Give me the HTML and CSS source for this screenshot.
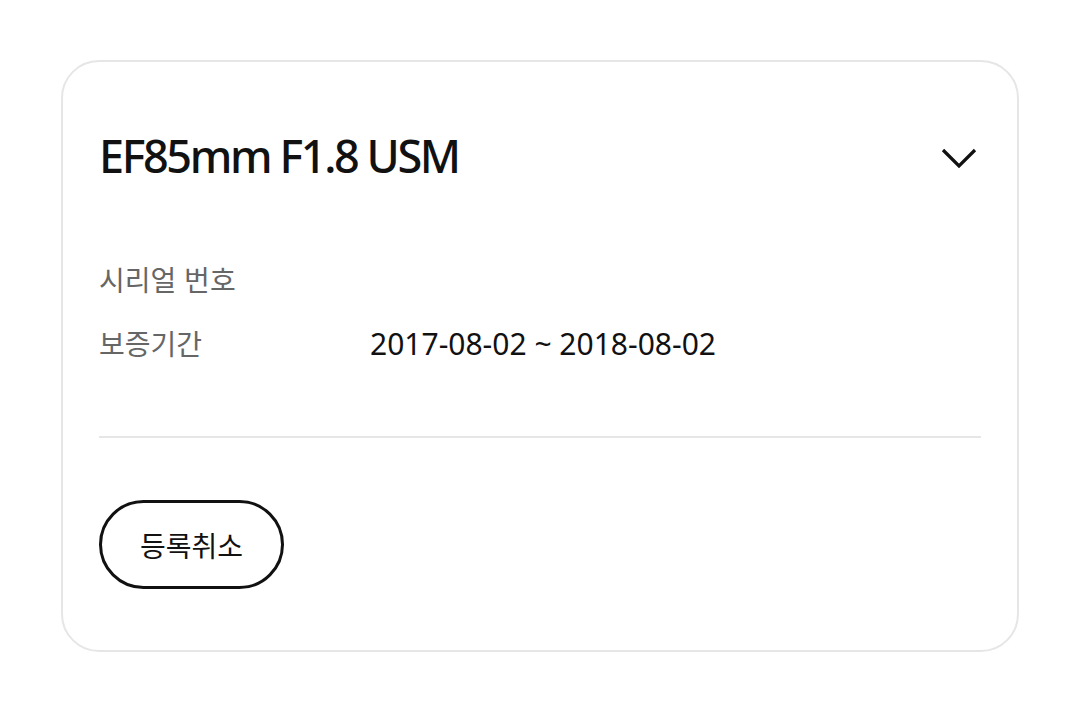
FILE: index.html
```html
<!DOCTYPE html>
<html lang="ko">
<head>
<meta charset="utf-8">
<link rel="stylesheet" href="styles.css">
</head>
<body>
<div class="card">
  <div class="head">
    <h2 class="title">EF85mm F1.8 USM</h2>
    <svg class="chev" width="36" height="22" viewBox="0 0 36 22"><path d="M2 3 L18 19 L34 3" fill="none" stroke="#111" stroke-width="3.2"/></svg>
  </div>
  <dl class="info">
    <div class="row"><dt>시리얼 번호</dt><dd></dd></div>
    <div class="row"><dt>보증기간</dt><dd>2017-08-02 ~ 2018-08-02</dd></div>
  </dl>
  <div class="divider"></div>
  <button class="btn">등록취소</button>
</div>
</body>
</html>
```
FILE: styles.css
```css
html, body { margin: 0; padding: 0; background: #fff; }
body { font-family: "Noto Sans", "Noto Sans CJK KR", sans-serif; color: #111; }
.card {
  box-sizing: border-box;
  margin: 60px 0 0 61px;
  width: 958px;
  height: 592px;
  border: 2px solid #e6e6e6;
  border-radius: 38px;
  padding: 0 36px;
}
.head {
  display: flex;
  align-items: center;
  justify-content: space-between;
  height: 186px;
  padding-right: 4px;
}
.title {
  margin: 0;
  font-size: 45px;
  font-weight: 500;
  letter-spacing: -2.4px;
}
.chev { display: block; margin-top: 6px; }
.info { margin: 9px 0 0; display: flex; flex-direction: column; gap: 20px; }
.row { display: flex; height: 44px; align-items: center; }
dt { width: 271px; font-family: "Noto Sans CJK KR", sans-serif; font-size: 28px; color: #666; }
dd { margin: 0; font-size: 30px; color: #111; }
.divider { height: 2px; background: #e6e6e6; margin-top: 71px; }
.btn {
  margin-top: 62px;
  box-sizing: border-box;
  width: 185px; height: 89px;
  border: 3px solid #111;
  border-radius: 45px;
  background: #fff;
  font-family: "Noto Sans CJK KR", sans-serif;
  font-size: 28px;
  color: #111;
  padding: 0;
}
```
